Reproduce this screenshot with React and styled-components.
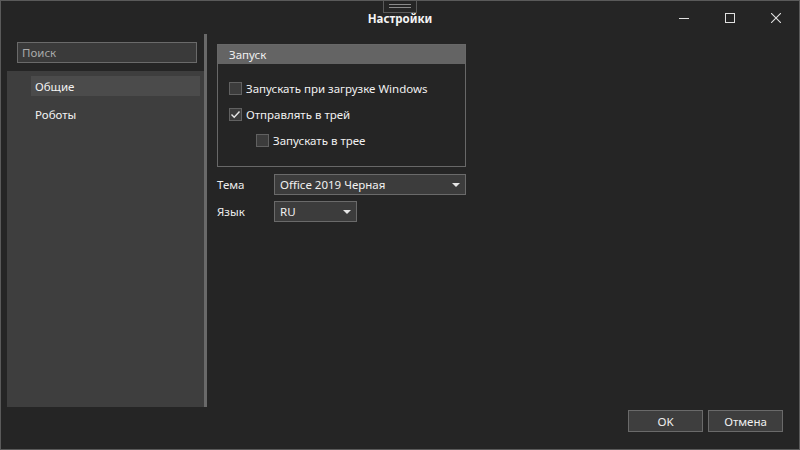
import React from 'react';
import styled, { createGlobalStyle } from 'styled-components';

const GlobalStyle = createGlobalStyle`
  html, body {
    margin: 0;
    padding: 0;
    background: #252525;
  }
  * {
    box-sizing: border-box;
  }
`;

const Window = styled.div`
  position: relative;
  width: 800px;
  height: 450px;
  background: #252525;
  border: 1px solid #5a5a5a;
  display: flex;
  flex-direction: column;
  font-family: 'Noto Sans', 'Open Sans', sans-serif;
  font-size: 11.5px;
  color: #f1f1f1;
  overflow: hidden;
`;

const TitleBar = styled.div`
  height: 33px;
  flex-shrink: 0;
  display: grid;
  grid-template-columns: 1fr auto 1fr;
  align-items: center;
`;

const Title = styled.div`
  grid-column: 2;
  font-weight: 700;
  font-size: 11.5px;
  color: #f4f4f4;
  padding-top: 1px;
`;

const Handle = styled.div`
  position: absolute;
  top: -1px;
  left: 382px;
  width: 34px;
  height: 13px;
  border: 1px solid #5a5a5a;
  border-top: none;
  display: flex;
  flex-direction: column;
  justify-content: center;
  gap: 2px;
  padding: 0 5px;

  span {
    display: block;
    height: 1px;
    background: #8a8a8a;
  }
`;

const Controls = styled.div`
  grid-column: 3;
  justify-self: end;
  display: flex;
  height: 100%;
`;

const ControlButton = styled.div`
  width: 46px;
  height: 100%;
  display: flex;
  align-items: center;
  justify-content: center;
  color: #e0e0e0;
`;

const Body = styled.div`
  flex: 1;
  display: flex;
  min-height: 0;
`;

const Sidebar = styled.div`
  width: 200px;
  margin-left: 6px;
  display: flex;
`;

const SidebarMain = styled.div`
  flex: 1;
  display: flex;
  flex-direction: column;
`;

const SearchWrap = styled.div`
  padding: 8px 7px 8px 10px;
`;

const SearchBox = styled.div`
  height: 21px;
  border: 1px solid #6a6a6a;
  background: #3a3a3a;
  color: #a9a9a9;
  padding: 0 4px;
  display: flex;
  align-items: center;
`;

const NavList = styled.div`
  flex: 1;
  background: #3e3e3e;
  padding: 5px 4px 0 24px;
  display: flex;
  flex-direction: column;
  gap: 8px;
`;

const NavItem = styled.div`
  height: 20px;
  display: flex;
  align-items: center;
  padding-left: 4px;
  background: ${p => (p.$active ? '#4b4b4b' : 'transparent')};
  color: #f2f2f2;
`;

const Splitter = styled.div`
  width: 3px;
  background: #696969;
`;

const Content = styled.div`
  flex: 1;
  padding: 10px 0 0 10px;
  display: flex;
  flex-direction: column;
`;

const Group = styled.div`
  width: 249px;
  height: 123px;
  border: 1px solid #686868;
`;

const GroupHeader = styled.div`
  height: 19px;
  background: #646464;
  display: flex;
  align-items: center;
  padding-left: 11px;
  color: #f0f0f0;
`;

const GroupBody = styled.div`
  padding: 14px 0 0 11px;
  display: flex;
  flex-direction: column;
  gap: 6px;
`;

const CheckRow = styled.label`
  display: flex;
  align-items: center;
  gap: 4px;
  height: 20px;
  padding-left: ${p => p.$indent || 0}px;
`;

const Box = styled.span`
  width: 13px;
  height: 13px;
  border: 1px solid #616161;
  background: #3c3c3c;
  display: flex;
  align-items: center;
  justify-content: center;
`;

const FormRow = styled.div`
  display: flex;
  align-items: center;
  margin-top: ${p => p.$top}px;
`;

const FieldLabel = styled.div`
  width: 57px;
  color: #ececec;
`;

const Combo = styled.div`
  width: ${p => p.$width}px;
  height: 21px;
  border: 1px solid #6a6a6a;
  background: #3c3c3c;
  display: flex;
  align-items: center;
  justify-content: space-between;
  padding: 0 4px 0 5px;
`;

const Arrow = styled.span`
  width: 0;
  height: 0;
  border-left: 4px solid transparent;
  border-right: 4px solid transparent;
  border-top: 4px solid #e6e6e6;
  margin-right: 1px;
`;

const Footer = styled.div`
  height: 42px;
  flex-shrink: 0;
  display: flex;
  justify-content: flex-end;
  gap: 5px;
  padding: 3px 16px 0 0;
`;

const Button = styled.div`
  width: 75px;
  height: 22px;
  border: 1px solid #6a6a6a;
  background: #3e3e3e;
  display: flex;
  align-items: center;
  justify-content: center;
  color: #f0f0f0;
`;

const Check = () => (
  <svg width="11" height="11" viewBox="0 0 11 11">
    <polyline points="1.5,5.5 4.2,8.2 9.5,2.5" fill="none" stroke="#e8e8e8" strokeWidth="1.4" />
  </svg>
);

const Checkbox = ({ checked, indent, children }) => (
  <CheckRow $indent={indent}>
    <Box>{checked && <Check />}</Box>
    {children}
  </CheckRow>
);

const App = () => {
  return (
    <>
      <GlobalStyle />
      <Window>
        <Handle>
          <span />
          <span />
        </Handle>
        <TitleBar>
          <Title>Настройки</Title>
          <Controls>
            <ControlButton>
              <svg width="10" height="10" viewBox="0 0 10 10">
                <line x1="0" y1="5.5" x2="10" y2="5.5" stroke="#e0e0e0" strokeWidth="1" />
              </svg>
            </ControlButton>
            <ControlButton>
              <svg width="10" height="10" viewBox="0 0 10 10">
                <rect x="0.5" y="0.5" width="9" height="9" fill="none" stroke="#e0e0e0" strokeWidth="1" />
              </svg>
            </ControlButton>
            <ControlButton>
              <svg width="10" height="10" viewBox="0 0 10 10">
                <path d="M0 0 L10 10 M10 0 L0 10" stroke="#e0e0e0" strokeWidth="1.1" />
              </svg>
            </ControlButton>
          </Controls>
        </TitleBar>
        <Body>
          <Sidebar>
            <SidebarMain>
              <SearchWrap>
                <SearchBox>Поиск</SearchBox>
              </SearchWrap>
              <NavList>
                <NavItem $active>Общие</NavItem>
                <NavItem>Роботы</NavItem>
              </NavList>
            </SidebarMain>
            <Splitter />
          </Sidebar>
          <Content>
            <Group>
              <GroupHeader>Запуск</GroupHeader>
              <GroupBody>
                <Checkbox>Запускать при загрузке Windows</Checkbox>
                <Checkbox checked>Отправлять в трей</Checkbox>
                <Checkbox indent={27}>Запускать в трее</Checkbox>
              </GroupBody>
            </Group>
            <FormRow $top={7}>
              <FieldLabel>Тема</FieldLabel>
              <Combo $width={192}>
                <span>Office 2019 Черная</span>
                <Arrow />
              </Combo>
            </FormRow>
            <FormRow $top={6}>
              <FieldLabel>Язык</FieldLabel>
              <Combo $width={83}>
                <span>RU</span>
                <Arrow />
              </Combo>
            </FormRow>
          </Content>
        </Body>
        <Footer>
          <Button>OK</Button>
          <Button>Отмена</Button>
        </Footer>
      </Window>
    </>
  );
};

export default App;
